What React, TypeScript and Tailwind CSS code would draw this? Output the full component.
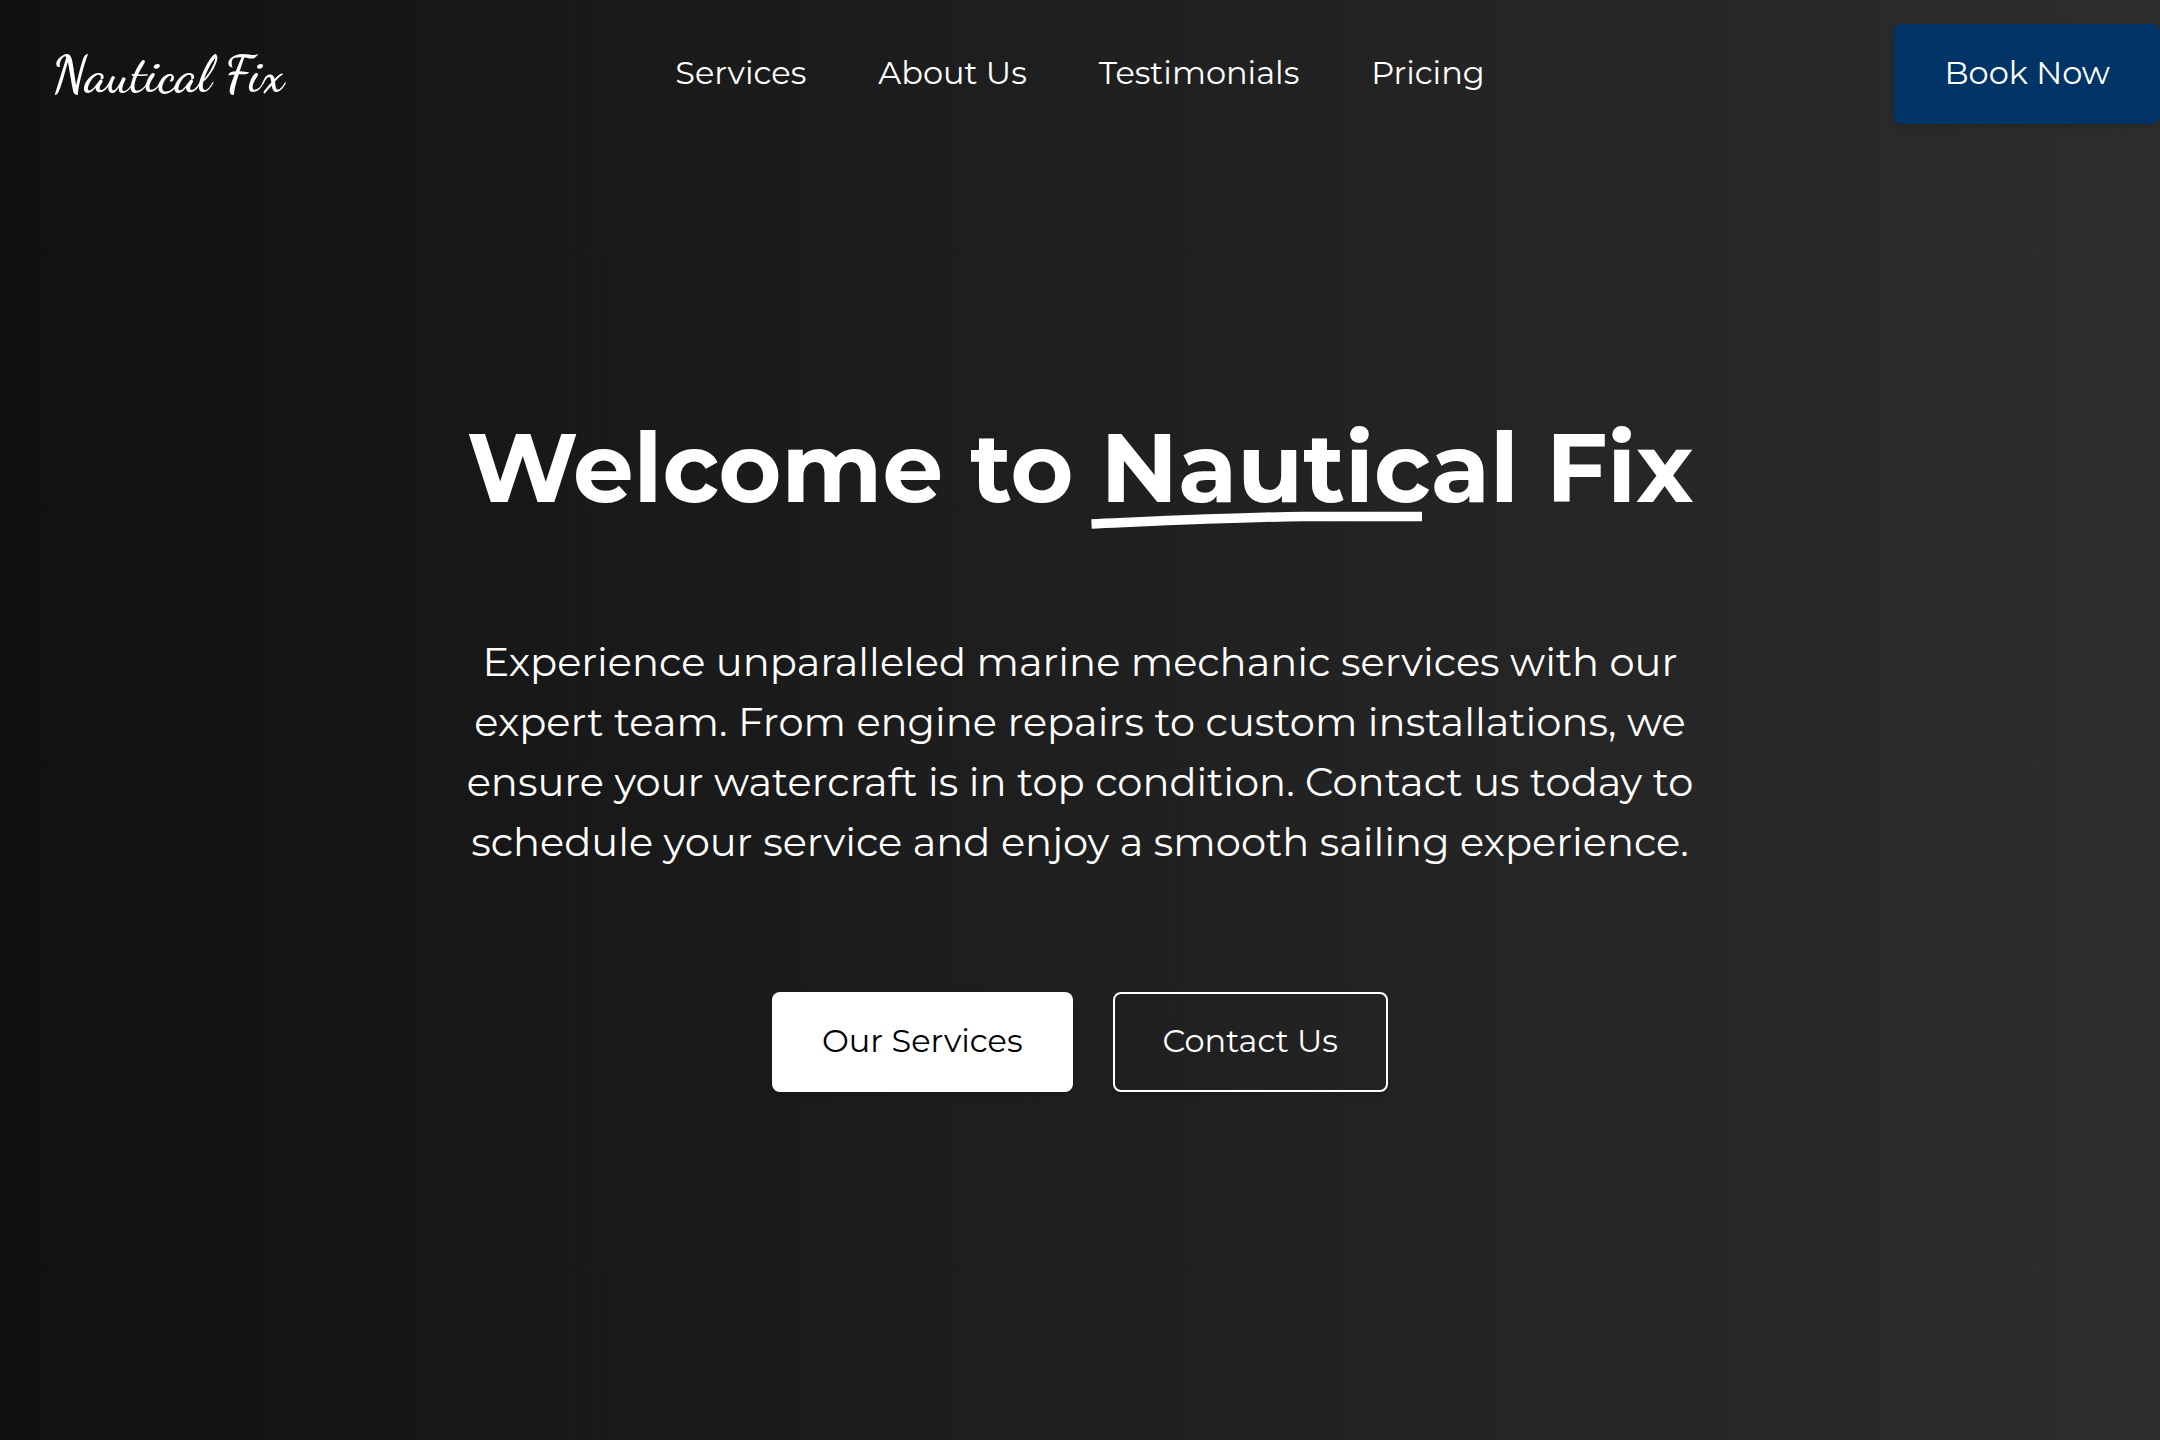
import React from 'react'

interface INavLink {
    label: string
    href: string
}

const navLinks: INavLink[] = [
    { label: 'Services', href: '#services' },
    { label: 'About Us', href: '#about' },
    { label: 'Testimonials', href: '#testimonials' },
    { label: 'Pricing', href: '#pricing' },
]

const Header = () => {
    return (
        <header className="grid grid-cols-[1fr_auto_1fr] items-center py-6">
            <a href="#" className="justify-self-start pl-[52px] pt-0.5 font-['Dancing_Script','Liberation_Serif',serif] text-[52px] leading-[60px] font-semibold">
                Nautical Fix
            </a>
            <nav className="flex gap-[72px] pb-0.5">
                {navLinks.map((link) => (
                    <a key={link.href} href={link.href} className="text-[32px] leading-[48px]">
                        {link.label}
                    </a>
                ))}
            </nav>
            <button type="button" className="h-[100px] justify-self-end rounded-lg bg-[#003366] px-[50px] pb-0.5 text-[32px] leading-[48px] shadow-md">
                Book Now
            </button>
        </header>
    )
}

const Hero = () => {
    return (
        <main className="flex flex-col items-center px-8 pt-[272px] text-center">
            <h1 className="text-[96px] leading-[96px] font-bold">
                Welcome to{' '}
                <span className="relative inline-block">
                    Nautical
                    {/* hand drawn underline */}
                    <svg
                        className="absolute -left-2.5 top-[88px] h-[24px] w-[332px]"
                        viewBox="0 0 332 24"
                        fill="none"
                        aria-hidden="true"
                    >
                        <path d="M0.5 16 C70 13 140 9.5 212 8.5 C250 8.5 290 8.5 331 8.5" stroke="white" strokeWidth="9.5" />
                    </svg>
                </span>{' '}
                Fix
            </h1>
            <p className="mt-[116px] max-w-[1240px] text-[40px] leading-[60px]">
                Experience unparalleled marine mechanic services with our expert team. From engine repairs to custom
                installations, we ensure your watercraft is in top condition. Contact us today to schedule your service
                and enjoy a smooth sailing experience.
            </p>
            <div className="mt-[120px] flex gap-10">
                <button type="button" className="h-[100px] rounded-lg bg-white px-[50px] pb-0.5 text-[32px] leading-[48px] text-black shadow-md">
                    Our Services
                </button>
                <button type="button" className="h-[100px] rounded-lg border-2 border-white px-12 pb-0.5 text-[32px] leading-[48px] shadow-md">
                    Contact Us
                </button>
            </div>
        </main>
    )
}

const App = () => {
    return (
        <div className="min-h-screen bg-linear-to-r/srgb from-[#111111] to-[#2d2d2d] font-[Montserrat,Inter,sans-serif] text-white">
            <Header />
            <Hero />
        </div>
    )
}

export default App
